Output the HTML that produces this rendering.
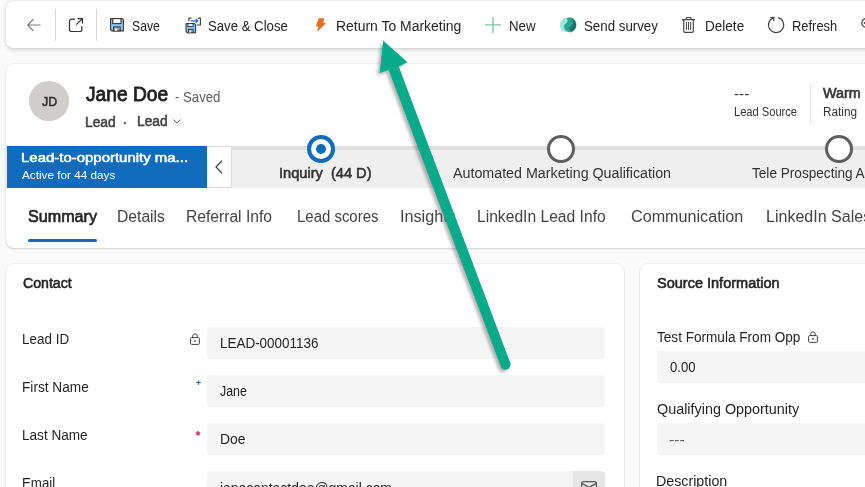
<!DOCTYPE html>
<html><head><meta charset="utf-8"><title>Lead: Jane Doe</title>
<style>
*{box-sizing:border-box;margin:0;padding:0}
html,body{width:865px;height:487px;overflow:hidden;background:#fafafa;font-family:"Liberation Sans",sans-serif;color:#242424}
.abs,.t{position:absolute;white-space:nowrap}
.t{line-height:1;transform-origin:0 0}
.card{position:absolute;background:#fff;box-shadow:0 0 2px rgba(0,0,0,.12),0 1px 2px rgba(0,0,0,.14)}
.sep{position:absolute;width:1px;background:#d6d6d6}
.inp{position:absolute;background:#f5f5f5;border-radius:4px;height:32px}
svg{position:absolute;overflow:visible}
</style></head><body>

<!-- toolbar -->
<div class="card" style="left:6px;top:1px;width:880px;height:47px;border-radius:7px 0 0 7px;box-shadow:0 0 2px rgba(0,0,0,.12),0 2px 4px rgba(0,0,0,.14)"></div>
<svg style="left:26px;top:17px" width="16" height="16" viewBox="0 0 16 16"><path d="M14.5 8H1.8M7.5 2.2L1.7 8l5.8 5.8" fill="none" stroke="#7a7a7a" stroke-width="1.2"/></svg>
<div class="sep" style="left:55px;top:9px;height:32px"></div>
<svg style="left:68px;top:17px" width="16" height="16" viewBox="0 0 16 16"><path d="M7 2.2H3.6a2.1 2.1 0 0 0-2.1 2.1v8.1a2.1 2.1 0 0 0 2.1 2.1h8.1a2.1 2.1 0 0 0 2.1-2.1V9" fill="none" stroke="#333" stroke-width="1.2"/><path d="M9.5 1.6h4.9v4.9M14.2 1.8L8.3 7.7" fill="none" stroke="#333" stroke-width="1.2"/></svg>
<div class="sep" style="left:96px;top:9px;height:32px"></div>
<!-- save icon -->
<svg style="left:110.200px;top:18.300px" width="14" height="13.500" viewBox="0 0 14 13.500"><path d="M.6.600H12.200L13.400 1.800V12.900H1.800L.6 11.700z" fill="#8fc5f3" stroke="#3b3b3b" stroke-width="1.100" stroke-linejoin="round"/><rect x="2.700" y=".600" width="8.300" height="5" fill="#fff" stroke="#3b3b3b" stroke-width="1.100"/><rect x="3.600" y="8.900" width="6.600" height="4" fill="#a8a8a8" stroke="#3b3b3b" stroke-width="1.100"/><rect x="5" y="10.500" width="1.700" height="2.400" fill="#fff"/></svg>
<!-- save&close icon -->
<svg style="left:184.500px;top:16.500px" width="16" height="16.500" viewBox="0 0 16 16.500"><path d="M1 6.600H9.400L10.600 7.800V15.700H2.200L1 14.500z" fill="#8fc5f3" stroke="#3b3b3b" stroke-width="1.100" stroke-linejoin="round"/><rect x="2.900" y="6.600" width="5.200" height="2.800" fill="#fff" stroke="#3b3b3b" stroke-width="1"/><rect x="3.400" y="12.300" width="4.800" height="3.400" fill="#a8a8a8" stroke="#3b3b3b" stroke-width="1"/><rect x="4.500" y="13.600" width="1.300" height="2.100" fill="#fff"/><path d="M3.900 4.300V1.100H6.400M12.800 1.100H15.400V8H11.800" fill="none" stroke="#3b3b3b" stroke-width="1.100"/><path d="M5.600 3.800H12.600M10.700 1.900L12.700 3.800 10.700 5.700" fill="none" stroke="#1f6fc0" stroke-width="1.300"/></svg>
<!-- bolt -->
<svg style="left:315px;top:18px" width="12" height="14" viewBox="0 0 12 14"><path d="M4 .900H8.600L7.500 5.200H10.200L2.900 12.300 4.100 8H1.500z" fill="#e3711f" stroke="#e3711f" stroke-width="1.100" stroke-linejoin="round"/></svg>
<!-- plus -->
<svg style="left:484.800px;top:17px" width="16" height="16" viewBox="0 0 16 16"><path d="M8 0v16M0 7.900h16" stroke="#7cc79a" stroke-width="1.400"/></svg>
<!-- survey -->
<svg style="left:560px;top:17px" width="16" height="16" viewBox="0 0 16 16"><ellipse cx="5.400" cy="8.100" rx="5.500" ry="7.200" fill="#a0e3d9"/><path d="M6.300.900C7.600.300 9.600.200 10.900.700C12.400 2.400 12.800 4.500 12.700 6.600C12.600 8.800 10 9.300 9.300 10.800C8.800 12.200 10 13.600 11.500 14.900C10 15.600 8.200 15.300 7 14.300C5.200 13 3.900 11 4.100 9C4.400 6.800 7.400 6.200 7.600 4C7.700 2.800 7.200 1.700 6.300.900z" fill="#27a594"/><path d="M10.900.700A7.600 7.600 0 0 1 11.500 14.900C10 13.600 8.800 12.200 9.300 10.800C10 9.300 12.600 8.800 12.700 6.600C12.800 4.500 12.400 2.400 10.900.700z" fill="#1a7365" stroke="#1a7365" stroke-width=".400"/></svg>
<!-- trash -->
<svg style="left:682px;top:16px" width="13" height="17" viewBox="0 0 13 17"><path d="M0 3.550H13M4.300 3.400V2Q4.300 1.450 4.850 1.450H8.350Q8.900 1.450 8.900 2V3.400M1.700 3.600V15Q1.700 16.300 3 16.300H10Q11.300 16.300 11.300 15V3.600" fill="none" stroke="#444" stroke-width="1.150"/><path d="M4.400 6v8M6.500 6v8M8.600 6v8" stroke="#444" stroke-width="1"/></svg>
<!-- refresh -->
<svg style="left:767px;top:16px" width="17" height="17" viewBox="0 0 17 17"><path d="M11.200 1.700A7.600 7.600 0 1 1 6.400 1.900" fill="none" stroke="#444" stroke-width="1.200"/><path d="M3.200 1.500L6.900 1.400 6.600 5" fill="none" stroke="#444" stroke-width="1.200"/></svg>
<svg style="left:861px;top:17.500px" width="10" height="10" viewBox="0 0 10 10"><circle cx="5.200" cy="5" r="4.400" fill="none" stroke="#444" stroke-width="1.200"/><circle cx="3.600" cy="5" r=".900" fill="#444"/></svg>

<!-- header card -->
<div class="card" style="left:6px;top:64px;width:880px;height:183.600px;border-radius:8px 0 0 8px"></div>
<div class="abs" style="left:29px;top:81px;width:40px;height:40px;border-radius:50%;background:#d0cdca"></div>
<svg style="left:173px;top:119px" width="8" height="5" viewBox="0 0 8 5"><path d="M.5.600L4 4.200 7.500.600" fill="none" stroke="#555" stroke-width="1"/></svg>

<div class="sep" style="left:810px;top:85px;height:37.500px;background:#e0e0e0"></div>

<!-- BPF -->
<div class="abs" style="left:6px;top:146px;width:880px;height:42px;background:#efefef"></div>
<div class="abs" style="left:6px;top:146px;width:880px;height:3.600px;background:#dedede"></div>
<div class="abs" style="left:7px;top:146px;width:200px;height:42px;background:#0f6cbd"></div>
<div class="abs" style="left:207px;top:146px;width:25px;height:42px;background:#fff;border:1px solid #dcdcdc;border-left:0"></div>
<svg style="left:214.700px;top:160px" width="8" height="14" viewBox="0 0 8 14"><path d="M7 .600L1 7l6 6.400" fill="none" stroke="#333" stroke-width="1.200"/></svg>

<div class="abs" style="left:307px;top:135px;width:28px;height:28px;border-radius:50%;background:#fff;border:4px solid #0f6cbd"></div>
<div class="abs" style="left:316px;top:144px;width:10px;height:10px;border-radius:50%;background:#0f6cbd"></div>
<div class="abs" style="left:547px;top:135px;width:28px;height:28px;border-radius:50%;background:#fff;border:3.300px solid #5e5e5e"></div>
<div class="abs" style="left:825px;top:135px;width:28px;height:28px;border-radius:50%;background:#fff;border:3.300px solid #5e5e5e"></div>

<!-- tabs -->
<div class="abs" style="left:28px;top:239px;width:69px;height:3px;border-radius:2px;background:#0f6cbd"></div>

<!-- contact card -->
<div class="card" style="left:6px;top:264px;width:618px;height:260px;border-radius:8px 8px 0 0"></div>
<svg style="left:190px;top:333px" width="10" height="12" viewBox="0 0 10 12"><rect x=".600" y="4.600" width="8.800" height="6.800" rx="1" fill="none" stroke="#444" stroke-width="1"/><path d="M2.800 4.600V3a2.200 2.200 0 0 1 4.400 0v1.600" fill="none" stroke="#444" stroke-width="1"/><rect x="4.400" y="7" width="1.200" height="2" fill="#444"/></svg>
<div class="inp" style="left:207px;top:327px;width:398px"></div>
<div class="t" style="left:195.700px;top:379.200px;font-size:9px;font-weight:bold;color:#0f6cbd">+</div>
<div class="inp" style="left:207px;top:375px;width:398px"></div>
<div class="t" style="left:195.600px;top:429.200px;font-size:13px;font-weight:bold;color:#b8325a">*</div>
<div class="inp" style="left:207px;top:423px;width:398px"></div>
<div class="inp" style="left:207px;top:471px;width:398px"></div>
<div class="abs" style="left:573px;top:471px;width:32px;height:32px;background:#e6e6e6;border-radius:0 4px 4px 0"></div>
<svg style="left:581px;top:481px" width="16" height="12" viewBox="0 0 16 12"><rect x=".600" y=".600" width="14.800" height="10.800" rx="2" fill="none" stroke="#555" stroke-width="1.250"/><path d="M.800 2.400L8 6.400l7.200-4" fill="none" stroke="#555" stroke-width="1.250"/></svg>

<!-- source card -->
<div class="card" style="left:640px;top:264px;width:260px;height:260px;border-radius:8px 0 0 0"></div>
<svg style="left:808px;top:331px" width="10" height="12" viewBox="0 0 10 12"><rect x=".600" y="4.600" width="8.800" height="6.800" rx="1" fill="none" stroke="#444" stroke-width="1"/><path d="M2.800 4.600V3a2.200 2.200 0 0 1 4.400 0v1.600" fill="none" stroke="#444" stroke-width="1"/><rect x="4.400" y="7" width="1.200" height="2" fill="#444"/></svg>
<div class="inp" style="left:657px;top:351.300px;width:240px"></div>
<div class="inp" style="left:657px;top:423.300px;width:240px"></div>

<div class="t" id="tSave" style="left:131.90px;top:19.35px;font-size:14px;color:#242424;transform:scaleX(0.8747)">Save</div>
<div class="t" id="tSaveClose" style="left:208.00px;top:19.35px;font-size:14px;color:#242424;transform:scaleX(0.9408)">Save &amp; Close</div>
<div class="t" id="tReturn" style="left:335.70px;top:19.35px;font-size:14px;color:#242424;transform:scaleX(0.9962)">Return To Marketing</div>
<div class="t" id="tNew" style="left:508.55px;top:19.35px;font-size:14px;color:#242424;transform:scaleX(0.9499)">New</div>
<div class="t" id="tSurvey" style="left:583.60px;top:19.35px;font-size:14px;color:#242424;transform:scaleX(0.9496)">Send survey</div>
<div class="t" id="tDelete" style="left:704.63px;top:19.35px;font-size:14px;color:#242424;transform:scaleX(0.9677)">Delete</div>
<div class="t" id="tRefresh" style="left:791.98px;top:19.35px;font-size:14px;color:#242424;transform:scaleX(0.9231)">Refresh</div>
<div class="t" id="tJD" style="left:41.60px;top:94.80px;font-size:13px;-webkit-text-stroke:0.52px #2b2b2b;color:#2b2b2b;transform:scaleX(0.9484)">JD</div>
<div class="t" id="tName" style="left:85.50px;top:84.27px;font-size:20px;-webkit-text-stroke:0.80px #1f1f1f;color:#1f1f1f;transform:scaleX(0.9592)">Jane Doe</div>
<div class="t" id="tSaved" style="left:174.80px;top:89.75px;font-size:14px;color:#5c5c5c;transform:scaleX(0.9418)">- Saved</div>
<div class="t" id="tLead1" style="left:84.52px;top:114.65px;font-size:14px;-webkit-text-stroke:0.56px #424242;color:#424242;transform:scaleX(0.9810)">Lead</div>
<div class="t" id="tDot" style="left:122.80px;top:114.65px;font-size:14px;-webkit-text-stroke:0.56px #424242;color:#424242;transform:scaleX(0.8000)">·</div>
<div class="t" id="tLead2" style="left:136.62px;top:113.95px;font-size:14px;-webkit-text-stroke:0.56px #424242;color:#424242;transform:scaleX(0.9844)">Lead</div>
<div class="t" id="tDash" style="left:734.00px;top:87.45px;font-size:14px;color:#333;transform:scaleX(1.0891)">---</div>
<div class="t" id="tLeadSource" style="left:734.00px;top:105.64px;font-size:12px;color:#333;transform:scaleX(0.9258)">Lead Source</div>
<div class="t" id="tWarm" style="left:823.00px;top:85.85px;font-size:14px;-webkit-text-stroke:0.56px #333;color:#333;transform:scaleX(1.0237)">Warm</div>
<div class="t" id="tRating" style="left:823.00px;top:105.64px;font-size:12px;color:#333;transform:scaleX(0.9820)">Rating</div>
<div class="t" id="tBpf1" style="left:21.09px;top:151.07px;font-size:13.5px;-webkit-text-stroke:0.54px #fff;color:#fff;transform:scaleX(1.1074)">Lead-to-opportunity ma...</div>
<div class="t" id="tBpf2" style="left:22.20px;top:169.79px;font-size:11px;color:#fff;transform:scaleX(1.0667)">Active for 44 days</div>
<div class="t" id="tInq" style="left:278.76px;top:166.25px;font-size:14px;-webkit-text-stroke:0.56px #333;color:#333;transform:scaleX(1.0433)">Inquiry&nbsp; (44 D)</div>
<div class="t" id="tAuto" style="left:452.50px;top:165.85px;font-size:14px;color:#333;transform:scaleX(1.0187)">Automated Marketing Qualification</div>
<div class="t" id="tTele" style="left:751.90px;top:165.85px;font-size:14px;color:#333;transform:scaleX(0.9716)">Tele Prospecting A</div>
<div class="t" id="tab1" style="left:28.20px;top:208.96px;font-size:16px;-webkit-text-stroke:0.64px #242424;color:#242424;transform:scaleX(1.0080)">Summary</div>
<div class="t" id="tab2" style="left:117.02px;top:208.96px;font-size:16px;color:#424242;transform:scaleX(0.9790)">Details</div>
<div class="t" id="tab3" style="left:186.12px;top:208.96px;font-size:16px;color:#424242;transform:scaleX(0.9766)">Referral Info</div>
<div class="t" id="tab4" style="left:296.77px;top:208.96px;font-size:16px;color:#424242;transform:scaleX(0.9343)">Lead scores</div>
<div class="t" id="tab5" style="left:400.29px;top:208.96px;font-size:16px;color:#424242;transform:scaleX(1.0123)">Insights</div>
<div class="t" id="tab6" style="left:477.42px;top:208.96px;font-size:16px;color:#424242;transform:scaleX(0.9773)">LinkedIn Lead Info</div>
<div class="t" id="tab7" style="left:631.30px;top:208.96px;font-size:16px;color:#424242;transform:scaleX(1.0095)">Communication</div>
<div class="t" id="tab8" style="left:766.10px;top:208.96px;font-size:16px;color:#424242;transform:scaleX(1.0018)">LinkedIn Sales</div>
<div class="t" id="tContact" style="left:23.30px;top:276.45px;font-size:14px;-webkit-text-stroke:0.56px #242424;color:#242424;transform:scaleX(1.0091)">Contact</div>
<div class="t" id="lbl1" style="left:22.34px;top:331.95px;font-size:14px;color:#242424;transform:scaleX(0.9619)">Lead ID</div>
<div class="t" id="val1" style="left:219.64px;top:336.25px;font-size:14px;color:#242424;transform:scaleX(0.9607)">LEAD-00001136</div>
<div class="t" id="lbl2" style="left:22.32px;top:379.75px;font-size:14px;color:#242424;transform:scaleX(0.9754)">First Name</div>
<div class="t" id="val2" style="left:219.90px;top:384.25px;font-size:14px;color:#242424;transform:scaleX(0.8864)">Jane</div>
<div class="t" id="lbl3" style="left:22.33px;top:428.05px;font-size:14px;color:#242424;transform:scaleX(0.9700)">Last Name</div>
<div class="t" id="val3" style="left:219.61px;top:432.25px;font-size:14px;color:#242424;transform:scaleX(0.9921)">Doe</div>
<div class="t" id="lbl4" style="left:22.35px;top:476.15px;font-size:14px;color:#242424;transform:scaleX(0.9500)">Email</div>
<div class="t" id="val4" style="left:219.99px;top:480.85px;font-size:14px;color:#242424;transform:scaleX(0.9942)">janecontactdoe@gmail.com</div>
<div class="t" id="tSource" style="left:656.80px;top:276.15px;font-size:14px;-webkit-text-stroke:0.56px #242424;color:#242424;transform:scaleX(1.0366)">Source Information</div>
<div class="t" id="lbl5" style="left:656.80px;top:330.05px;font-size:14px;color:#242424;transform:scaleX(0.9701)">Test Formula From Opp</div>
<div class="t" id="val5" style="left:669.60px;top:360.15px;font-size:14px;color:#242424;transform:scaleX(0.9395)">0.00</div>
<div class="t" id="lbl6" style="left:656.80px;top:402.05px;font-size:14px;color:#242424;transform:scaleX(1.0266)">Qualifying Opportunity</div>
<div class="t" id="val6" style="left:669.00px;top:432.95px;font-size:14px;color:#616161;transform:scaleX(1.1170)">---</div>
<div class="t" id="lbl7" style="left:655.78px;top:474.35px;font-size:14px;color:#242424;transform:scaleX(1.0170)">Description</div>
<!-- arrow -->
<svg style="left:0;top:0" width="865" height="487" viewBox="0 0 865 487">
<defs><filter id="sh" x="-20%" y="-20%" width="140%" height="140%"><feGaussianBlur stdDeviation="1.800"/></filter></defs>
<g transform="translate(-2.500,2.500)" opacity=".38" filter="url(#sh)"><path d="M383.200 40.500L407.500 62.300L398.800 66.400L510.600 363.800A5.200 5.200 0 0 1 501.200 367.400L388.600 70.100L379.700 72.900Z" fill="#444"/></g>
<path d="M383.200 40.500L407.500 62.300L398.800 66.400L510.600 363.800A5.200 5.200 0 0 1 501.200 367.400L388.600 70.100L379.700 72.900Z" fill="#08aa8b"/>
</svg>
</body></html>
